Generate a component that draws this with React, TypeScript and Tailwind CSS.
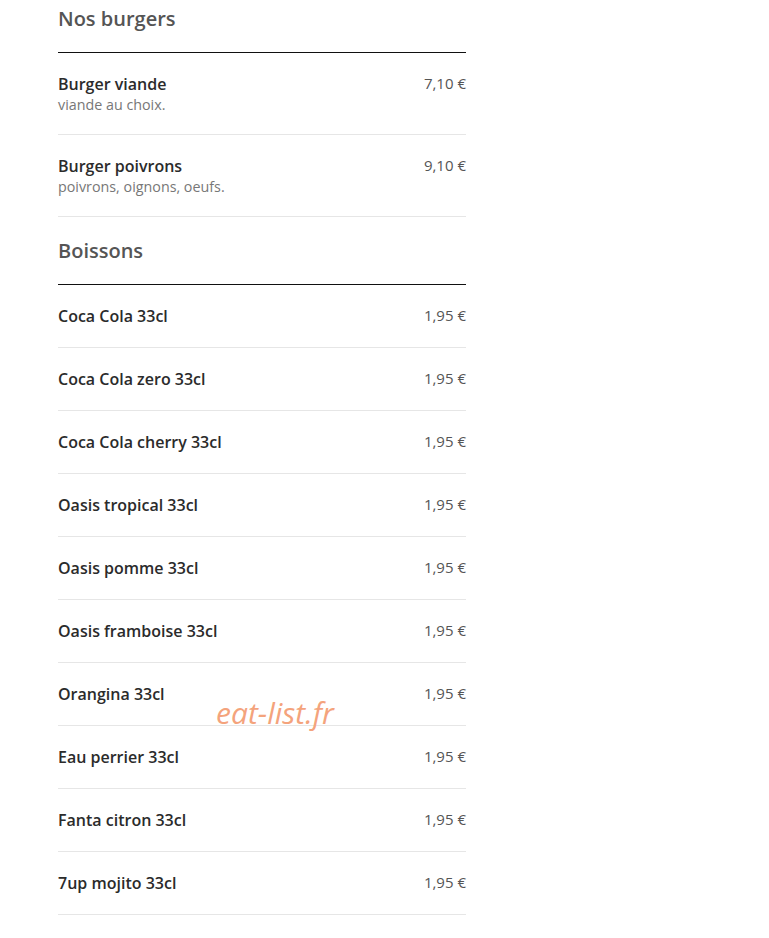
import React from "react";

const burgers = [
  { name: "Burger viande", desc: "viande au choix.", price: "7,10 €" },
  { name: "Burger poivrons", desc: "poivrons, oignons, oeufs.", price: "9,10 €" },
];

const drinks = [
  "Coca Cola 33cl",
  "Coca Cola zero 33cl",
  "Coca Cola cherry 33cl",
  "Oasis tropical 33cl",
  "Oasis pomme 33cl",
  "Oasis framboise 33cl",
  "Orangina 33cl",
  "Eau perrier 33cl",
  "Fanta citron 33cl",
  "7up mojito 33cl",
];

function Row({ name, desc, price }: { name: string; desc?: string; price: string }) {
  return (
    <div className="flex justify-between items-start border-b border-[#e6e6e6] pt-[20px] pb-[20px]">
      <div className="flex flex-col">
        <div className="text-[16px] leading-[22px] font-semibold text-[#2b2b2b]">{name}</div>
        {desc && <div className="text-[14.3px] leading-[19px] text-[#777]">{desc}</div>}
      </div>
      <div className="text-[15px] leading-[21px] font-medium text-[#555]">{price}</div>
    </div>
  );
}

function Heading({ title }: { title: string }) {
  return (
    <div className="pt-[20px] pb-[19px] border-b border-[#111]">
      <h2 className="text-[20px] leading-[28px] font-semibold text-[#555]">{title}</h2>
    </div>
  );
}

export default function App() {
  return (
    <div className="relative min-h-[938px] bg-white overflow-hidden" style={{ fontFamily: '"Open Sans", sans-serif' }}>
      <div className="ml-[58px] w-[408px] -mt-[15px]">
        <Heading title="Nos burgers" />
        {burgers.map((b) => (
          <Row key={b.name} name={b.name} desc={b.desc} price={b.price} />
        ))}
        <Heading title="Boissons" />
        {drinks.map((d) => (
          <Row key={d} name={d} price="1,95 €" />
        ))}
      </div>
      <div className="absolute left-[216px] top-[692px] text-[30px] leading-[42px] italic text-[#f4a37c] pointer-events-none">
        eat-list.fr
      </div>
    </div>
  );
}
